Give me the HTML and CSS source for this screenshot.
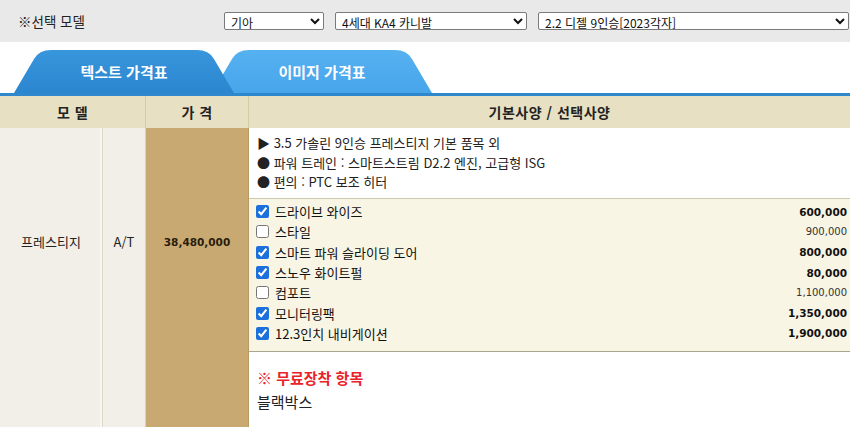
FILE: index.html
```html
<!DOCTYPE html>
<html lang="ko">
<head>
    <meta charset="UTF-8">
    <title>가격표</title>
    <link rel="stylesheet" href="styles.css">
</head>
<body>
    <div class="topbar">
        <span class="topbar-label">※선택 모델</span>
        <select class="sel sel-brand"><option>기아</option></select>
        <select class="sel sel-car"><option>4세대 KA4 카니발</option></select>
        <select class="sel sel-trim"><option>2.2 디젤 9인승[2023각자]</option></select>
    </div>

    <div class="tabs">
        <div class="tab tab-text">
            <svg class="tab-bg" viewBox="0 0 220 43" preserveAspectRatio="none">
                <defs>
                    <linearGradient id="g1" x1="0" y1="0" x2="0" y2="1">
                        <stop offset="0" stop-color="#3896dc"/>
                        <stop offset="1" stop-color="#2b86cf"/>
                    </linearGradient>
                </defs>
                <path d="M0,43 L20,9 Q25,0 37,0 L183,0 Q195,0 200,9 L220,43 Z" fill="url(#g1)"/>
            </svg>
            <span>텍스트 가격표</span>
        </div>
        <div class="tab tab-image">
            <svg class="tab-bg" viewBox="0 0 220 43" preserveAspectRatio="none">
                <defs>
                    <linearGradient id="g2" x1="0" y1="0" x2="0" y2="1">
                        <stop offset="0" stop-color="#56b1f1"/>
                        <stop offset="1" stop-color="#47a5ea"/>
                    </linearGradient>
                </defs>
                <path d="M0,43 L20,9 Q25,0 37,0 L183,0 Q195,0 200,9 L220,43 Z" fill="url(#g2)"/>
            </svg>
            <span>이미지 가격표</span>
        </div>
    </div>

    <div class="price-table">
        <div class="th th-model">모 델</div>
        <div class="th th-price">가 격</div>
        <div class="th th-spec">기본사양 / 선택사양</div>

        <div class="td td-name">프레스티지</div>
        <div class="td td-trans">A/T</div>
        <div class="td td-price">38,480,000</div>
        <div class="td td-spec">
            <div class="basic">
                <p>▶ 3.5 가솔린 9인승 프레스티지 기본 품목 외</p>
                <p>● 파워 트레인 : 스마트스트림 D2.2 엔진, 고급형 ISG</p>
                <p>● 편의 : PTC 보조 히터</p>
            </div>
            <ul class="options">
                <li class="on"><label><input type="checkbox" checked> 드라이브 와이즈</label><span class="amt">600,000</span></li>
                <li><label><input type="checkbox"> 스타일</label><span class="amt">900,000</span></li>
                <li class="on"><label><input type="checkbox" checked> 스마트 파워 슬라이딩 도어</label><span class="amt">800,000</span></li>
                <li class="on"><label><input type="checkbox" checked> 스노우 화이트펄</label><span class="amt">80,000</span></li>
                <li><label><input type="checkbox"> 컴포트</label><span class="amt">1,100,000</span></li>
                <li class="on"><label><input type="checkbox" checked> 모니터링팩</label><span class="amt">1,350,000</span></li>
                <li class="on"><label><input type="checkbox" checked> 12.3인치 내비게이션</label><span class="amt">1,900,000</span></li>
            </ul>
            <div class="free">
                <p class="free-title">※ 무료장착 항목</p>
                <p>블랙박스</p>
            </div>
        </div>
    </div>
</body>
</html>
```

FILE: styles.css
```css
body {
    margin: 0;
    padding: 0;
    font-family: "Noto Sans CJK KR", "Noto Sans", sans-serif;
    color: #222;
    background: #ffffff;
    overflow: hidden;
}

p {
    margin: 0;
}

/* top selector bar */
.topbar {
    height: 42px;
    background: #e9e9e9;
    display: flex;
    align-items: center;
    padding-left: 18px;
    gap: 11px;
}

.topbar-label {
    width: 195px;
    font-size: 13.5px;
    color: #222;
}

.sel {
    height: 18px;
    font-family: "Noto Sans CJK KR", sans-serif;
    font-size: 12px;
    padding: 0 2px;
    border: 1px solid #7a7a7a;
    border-radius: 2px;
    background: #ffffff;
    color: #111;
}

.sel-brand { width: 100px; }
.sel-car { width: 192px; }
.sel-trim { width: 311px; }

/* tabs */
.tabs {
    display: flex;
    padding: 8px 0 0 14px;
    border-bottom: 3px solid #2f88cb;
}

.tab {
    position: relative;
    width: 220px;
    height: 43px;
    display: flex;
    align-items: center;
    justify-content: center;
    color: #ffffff;
    font-size: 15px;
    font-weight: 700;
}

.tab span {
    position: relative;
    margin-top: -1px;
}

.tab-bg {
    position: absolute;
    inset: 0;
    width: 100%;
    height: 100%;
}

.tab-text {
    z-index: 2;
}

.tab-image {
    margin-left: -22px;
    z-index: 1;
}

/* table */
.price-table {
    display: grid;
    grid-template-columns: 103px 43px 103px 1fr;
    font-size: 13px;
}

.th {
    height: 32px;
    display: flex;
    align-items: center;
    justify-content: center;
    background: #e7e0c2;
    font-weight: 700;
    font-size: 14px;
    letter-spacing: 0.5px;
    border-right: 1px solid #d3caa6;
    box-sizing: border-box;
}

.th-model {
    grid-column: span 2;
}

.th-spec {
    border-right: none;
}

.td {
    box-sizing: border-box;
    border-right: 1px solid #d6d1bd;
}

.td-name,
.td-trans {
    background: #f1efe7;
    text-align: center;
    padding-top: 104px;
    line-height: 20px;
}

.td-name {
    border-right: 1px solid #ddd9c9;
    box-shadow: inset -2px 0 0 #f7f6f1;
}

.td-price {
    background: #c8a972;
    text-align: center;
    padding-top: 104px;
    line-height: 20px;
    font-family: "DejaVu Sans", sans-serif;
    font-weight: 700;
    font-size: 10.5px;
    color: #2b1c0c;
    border-right: 1px solid #b99a62;
}

.td-spec {
    border-right: none;
    background: #ffffff;
}

.basic {
    padding: 5px 8px 6px;
    font-size: 13px;
    line-height: 19.5px;
    border-bottom: 1px solid #cfc9b0;
}

.options {
    list-style: none;
    margin: 0;
    padding: 3px 3px 7px 6px;
    background: #f8f5e5;
    border-bottom: 1px solid #a9a58f;
}

.options li {
    height: 20.3px;
    display: flex;
    align-items: center;
    justify-content: space-between;
}

.options label {
    display: flex;
    align-items: center;
    font-size: 13px;
    color: #111;
}

.options input {
    width: 13px;
    height: 13px;
    margin: 0 6px 0 1px;
    accent-color: #1d6fdc;
}

.amt {
    font-family: "DejaVu Sans", sans-serif;
    font-size: 10px;
    color: #333;
}

.options li.on .amt {
    font-weight: 700;
    font-size: 10.5px;
    color: #111;
}

.free {
    padding: 14px 8px 20px;
    font-size: 15px;
    line-height: 24px;
}

.free-title {
    color: #e8232b;
    font-weight: 600;
}
```
